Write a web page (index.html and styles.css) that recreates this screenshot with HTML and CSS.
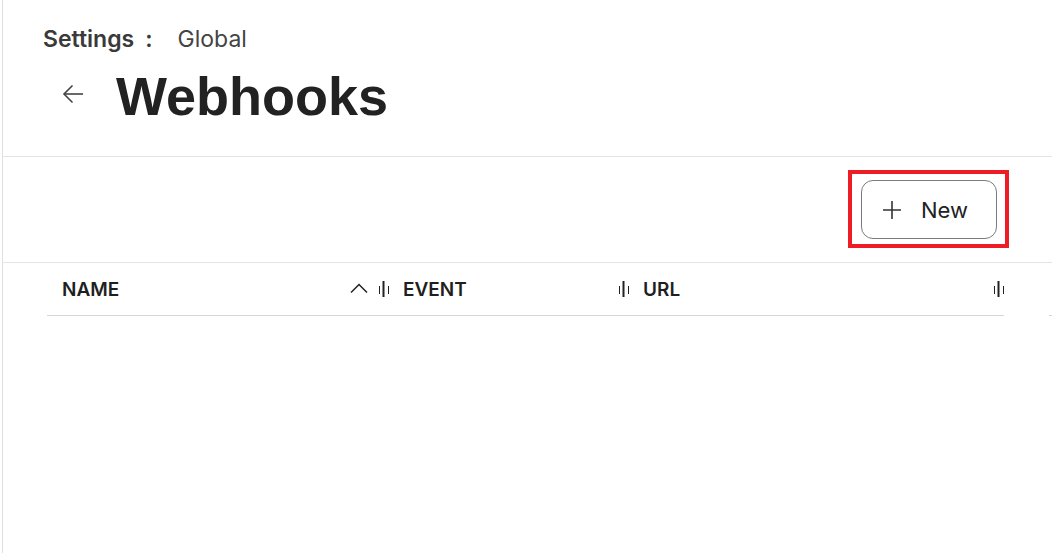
FILE: index.html
```html
<!DOCTYPE html>
<html lang="en">
<head>
  <meta charset="UTF-8" />
  <title>Webhooks</title>
  <link rel="stylesheet" href="styles.css">
</head>
<body>
  <div class="page">
    <header class="page-header">
      <div class="breadcrumb">
        <span class="crumb-root">Settings</span>
        <span class="crumb-sep">:</span>
        <span class="crumb-current">Global</span>
      </div>
      <div class="title-row">
        <button class="back-btn" aria-label="Back">
          <svg width="24" height="24" viewBox="0 0 24 24" fill="none" stroke="#444" stroke-width="1.6">
            <path d="M22 12H3.5" />
            <path d="M11.5 3.5L3 12l8.5 8.5" />
          </svg>
        </button>
        <h1>Webhooks</h1>
      </div>
    </header>

    <div class="toolbar">
      <div class="highlight">
        <button class="new-btn">
          <svg width="20" height="20" viewBox="0 0 20 20" fill="none" stroke="#333" stroke-width="1.6">
            <path d="M10 1v18M1 10h18" />
          </svg>
          <span>New</span>
        </button>
      </div>
    </div>

    <div class="table-head">
      <div class="col col-name">
        <span class="col-label">NAME</span>
        <svg class="sort-icon" width="18" height="10" viewBox="0 0 18 10" fill="none" stroke="#222" stroke-width="1.5">
          <path d="M1 9.5L9 1.5l8 8" />
        </svg>
        <svg class="resize-icon" width="10" height="16" viewBox="0 0 10 16" fill="#222">
          <rect x="0" y="5" width="1" height="8" />
          <rect x="3.5" y="0" width="2" height="16" />
          <rect x="9" y="5" width="1" height="8" />
        </svg>
      </div>
      <div class="col col-event">
        <span class="col-label">EVENT</span>
        <svg class="resize-icon" width="10" height="16" viewBox="0 0 10 16" fill="#222">
          <rect x="0" y="5" width="1" height="8" />
          <rect x="3.5" y="0" width="2" height="16" />
          <rect x="9" y="5" width="1" height="8" />
        </svg>
      </div>
      <div class="col col-url">
        <span class="col-label">URL</span>
        <svg class="resize-icon" width="10" height="16" viewBox="0 0 10 16" fill="#222">
          <rect x="0" y="5" width="1" height="8" />
          <rect x="3.5" y="0" width="2" height="16" />
          <rect x="9" y="5" width="1" height="8" />
        </svg>
      </div>
      <div class="col col-more"></div>
    </div>
  </div>
</body>
</html>
```

FILE: styles.css
```css
html, body {
  margin: 0;
  padding: 0;
  background: #fff;
  overflow: hidden;
}
body {
  font-family: Inter, sans-serif;
  color: #222;
}
.page {
  margin-left: 2px;
  border-left: 1px solid #dfe0e4;
  min-height: 553px;
}
.page-header {
  padding: 26px 0 30px 40px;
  border-bottom: 1px solid #e4e4e4;
}
.breadcrumb {
  display: flex;
  align-items: center;
  font-size: 23px;
  line-height: 26px;
}
.crumb-root {
  font-weight: 600;
  color: #3a3a3a;
}
.crumb-sep {
  font-weight: 600;
  color: #3a3a3a;
  margin: 0 25px 0 11px;
}
.crumb-current {
  color: #444;
}
.title-row {
  display: flex;
  align-items: center;
  margin-top: 14px;
  height: 60px;
}
.back-btn {
  background: none;
  border: none;
  padding: 0;
  margin: 0 0 0 18px;
  width: 24px;
  height: 24px;
  cursor: pointer;
  position: relative;
  top: -2px;
}
.back-btn svg {
  display: block;
}
h1 {
  font-family: "Liberation Sans", Arial, sans-serif;
  font-size: 54px;
  line-height: 60px;
  font-weight: 700;
  color: #222;
  margin: 0 0 0 31px;
}
.toolbar {
  box-sizing: border-box;
  height: 106px;
  display: flex;
  align-items: flex-start;
  justify-content: flex-end;
  padding: 13px 43px 0 0;
  border-bottom: 1px solid #e4e4e4;
}
.highlight {
  border: 4px solid #ee1d25;
  padding: 6px 8px 5px 9px;
}
.new-btn {
  display: flex;
  align-items: center;
  gap: 19px;
  height: 59px;
  width: 136px;
  padding: 0 0 0 20px;
  border: 1px solid #7b7b7b;
  border-radius: 12px;
  background: #fff;
  font-family: Inter, sans-serif;
  font-size: 22px;
  color: #222;
  cursor: pointer;
}
.new-btn svg {
  display: block;
}
.table-head {
  display: flex;
  margin-left: 44px;
  height: 53px;
}
.col {
  display: flex;
  flex-shrink: 0;
  align-items: center;
  border-bottom: 1px solid #d6d6d6;
  box-sizing: border-box;
}
.col-label {
  font-size: 19px;
  font-weight: 600;
  color: #1f1f1f;
  flex: 1;
}
.col-name {
  width: 344px;
  padding: 0 2px 0 15px;
}
.col-event {
  width: 240px;
  padding: 0 2px 0 12px;
}
.col-url {
  width: 373px;
  padding: 0 0 0 12px;
}
.col-more {
  width: 3px;
  margin-left: 45px;
}
.sort-icon {
  display: block;
  margin-right: 11px;
  position: relative;
  top: -1px;
}
.resize-icon {
  display: block;
}
```
